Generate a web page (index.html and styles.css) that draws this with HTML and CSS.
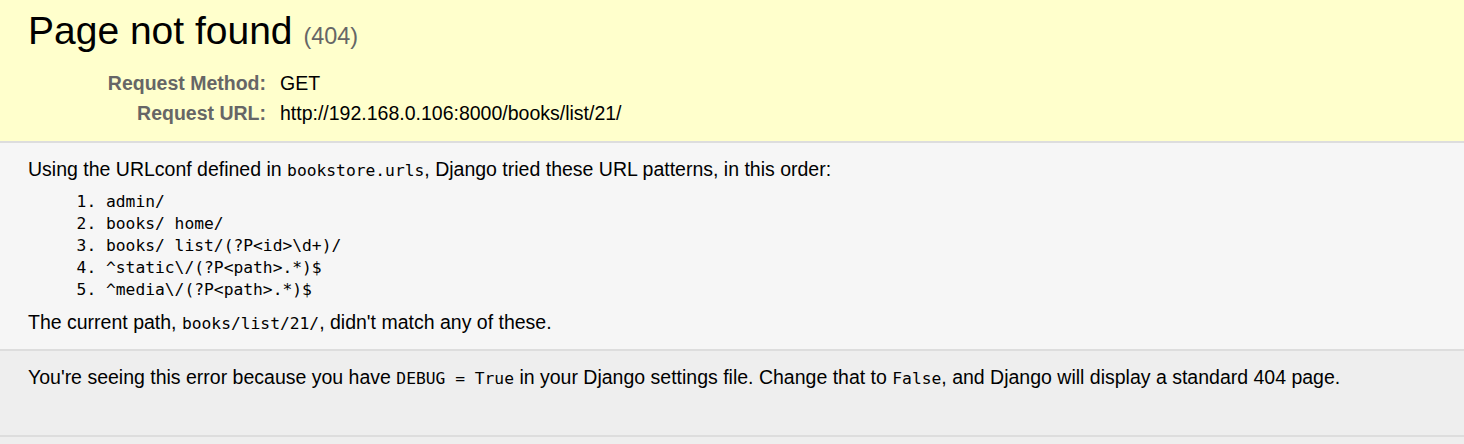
FILE: index.html
```html
<!DOCTYPE html>
<html lang="en">
<head>
<meta charset="utf-8">
<title>Page not found at /books/list/21/</title>
<link rel="stylesheet" href="styles.css">
</head>
<body>
<div class="summary">
  <h1 class="title">Page not found <span class="status">(404)</span></h1>
  <table class="meta">
    <tr><th>Request Method:</th><td>GET</td></tr>
    <tr><th>Request URL:</th><td>http://192.168.0.106:8000/books/list/21/</td></tr>
  </table>
</div>
<div class="info">
  <p class="line">Using the URLconf defined in <code class="mono">bookstore.urls</code>, Django tried these URL patterns, in this order:</p>
  <ol class="patterns">
    <li>admin/</li>
    <li>books/ home/</li>
    <li>books/ list/(?P&lt;id&gt;\d+)/</li>
    <li>^static\/(?P&lt;path&gt;.*)$</li>
    <li>^media\/(?P&lt;path&gt;.*)$</li>
  </ol>
  <p class="line">The current path, <code class="mono">books/list/21/</code>, didn't match any of these.</p>
</div>
<div class="explanation">
  <p class="line">You're seeing this error because you have <code class="mono">DEBUG = True</code> in your Django settings file. Change that to <code class="mono">False</code>, and Django will display a standard 404 page.</p>
</div>
</body>
</html>
```

FILE: styles.css
```css
html, body {
  margin: 0;
  padding: 0;
}

body {
  background: #eeeeee;
  color: #000;
  font-family: "Liberation Sans", Arial, sans-serif;
  font-size: 19.5px;
  line-height: 22px;
}

.summary {
  background: #ffffcc;
  padding: 9px 28px 13px;
  border-bottom: 2px solid #dddddd;
}

.title {
  margin: 0 0 15px;
  font-size: 39px;
  line-height: 44px;
  font-weight: normal;
}

.status {
  font-size: 60%;
  line-height: 1;
  color: #666666;
}

.meta {
  border-collapse: collapse;
  border: none;
}

.meta th,
.meta td {
  vertical-align: top;
  padding: 4px 3px;
  line-height: 22px;
}

.meta th {
  box-sizing: border-box;
  width: 249px;
  padding-right: 11px;
  text-align: right;
  color: #666666;
  font-weight: bold;
}

.info {
  background: #f6f6f6;
  padding: 15px 28px 14px;
  border-bottom: 2px solid #dddddd;
}

.line {
  margin: 0;
}

.mono {
  font-family: "DejaVu Sans Mono", "Liberation Mono", monospace;
  font-size: 16.3px;
}

.patterns {
  margin: 9px 0 10px;
  padding-left: 78px;
}

.patterns li {
  font-family: "DejaVu Sans Mono", "Liberation Mono", monospace;
  font-size: 16.3px;
  line-height: 22px;
}

.explanation {
  background: #eeeeee;
  padding: 15px 28px 45px;
  border-bottom: 2px solid #dddddd;
}
```
